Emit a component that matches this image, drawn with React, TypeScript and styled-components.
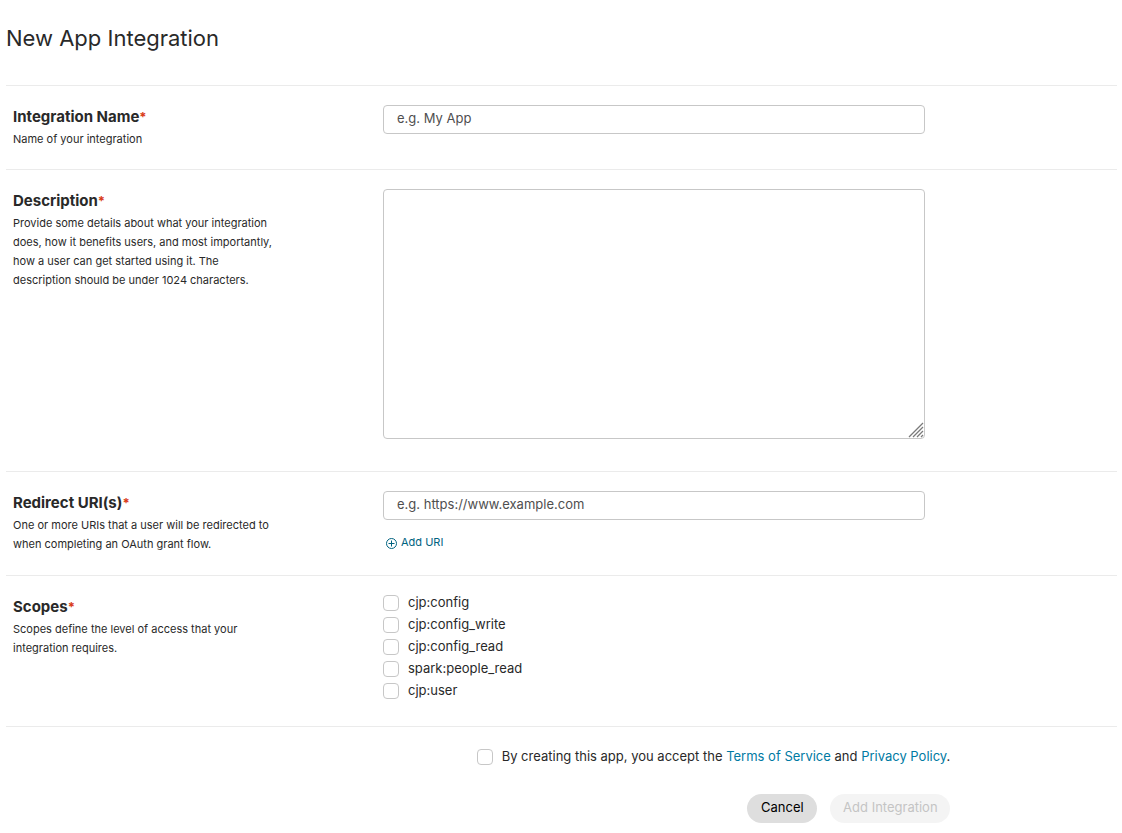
import React, { useState } from 'react';
import styled, { createGlobalStyle } from 'styled-components';

const GlobalStyle = createGlobalStyle`
  *, *::before, *::after { box-sizing: border-box; }
  body {
    margin: 0;
    background: #fff;
    color: #292929;
    font-family: Inter, "Liberation Sans", sans-serif;
    font-size: 13px;
    line-height: 20px;
  }
`;

const Page = styled.main`
  padding: 23px 5px 10px 6px;
`;

const Title = styled.h1`
  margin: 0 0 32px;
  font-size: 22px;
  line-height: 30px;
  font-weight: 400;
`;

const Section = styled.section`
  display: grid;
  grid-template-columns: minmax(0, 1fr) minmax(0, 2fr);
  column-gap: 6px;
  padding: 19px 6px 20px 7px;
  border-top: 1px solid #ebebeb;
`;

const Heading = styled.h2`
  margin: 0 0 1px;
  font-size: 15px;
  line-height: 24px;
  font-weight: 700;
`;

const Required = styled.span`
  color: #d93a16;
  font-size: 13px;
  line-height: 1;
`;

const Help = styled.p`
  max-width: 264px;
  margin: 0;
  font-size: 11px;
  line-height: 19px;
`;

const Field = styled.div`
  display: flex;
  flex-direction: column;
  align-items: flex-start;
`;

const TextInput = styled.input`
  width: 100%;
  max-width: 542px;
  height: 29px;
  padding: 0 13px 3px;
  border: 1px solid #c7c7c7;
  border-radius: 4px;
  background: #fff;
  color: #292929;
  font: inherit;
  &::placeholder { color: #4f4f4f; opacity: 1; }
`;

const AreaWrap = styled.div`
  position: relative;
  width: 100%;
  max-width: 542px;
  margin-bottom: 12px;
`;

const TextArea = styled.textarea`
  display: block;
  width: 100%;
  height: 250px;
  padding: 8px 13px;
  border: 1px solid #c7c7c7;
  border-radius: 4px;
  background: #fff;
  color: #292929;
  font: inherit;
  resize: vertical;
  &::-webkit-resizer { background: transparent; }
`;

const Grip = styled.svg`
  position: absolute;
  right: 1px;
  bottom: 1px;
  pointer-events: none;
`;

const AddButton = styled.button`
  display: flex;
  align-items: center;
  gap: 3px;
  margin: 12px 0 3px;
  padding: 0 3px;
  border: 0;
  background: none;
  color: #00627f;
  font: inherit;
  font-size: 11px;
  line-height: 20px;
  cursor: pointer;
`;

const List = styled.ul`
  margin: 0;
  padding: 0 0 1px;
  list-style: none;
`;

const ScopeRow = styled.li`
  display: flex;
  align-items: flex-start;
  gap: 9px;
  height: 22px;
  line-height: 14px;
`;

const Agreement = styled.div`
  display: flex;
  align-items: flex-start;
  gap: 9px;
  line-height: 14px;
`;

const Checkbox = styled.input`
  appearance: none;
  flex: none;
  width: 16px;
  height: 16px;
  margin: 0;
  border: 1px solid #c7c7c7;
  border-radius: 4px;
  background: #fff;
  &:checked { background: #007aa3; border-color: #007aa3; }
`;

const Link = styled.a`
  color: #007aa3;
  text-decoration: none;
`;

const FooterRule = styled.footer`
  padding-top: 22px;
  border-top: 1px solid #ebebeb;
`;

const FooterContent = styled.div`
  display: flex;
  flex-direction: column;
  align-items: flex-end;
  gap: 29px;
  width: 85%;
`;

const Actions = styled.div`
  display: flex;
  gap: 13px;
`;

const PillButton = styled.button<{ $width: number }>`
  min-width: ${(p) => p.$width}px;
  height: 29px;
  padding: 0 0 4px;
  border: 0;
  border-radius: 15px;
  background: #dedede;
  color: #000;
  font: inherit;
  &:disabled { background: #f4f4f4; color: #c4c4c4; }
`;

const scopes = ['cjp:config', 'cjp:config_write', 'cjp:config_read', 'spark:people_read', 'cjp:user'];

type SectionHeadProps = { title: string; help: string; htmlFor?: string };

function SectionHead({ title, help, htmlFor }: SectionHeadProps) {
  return (
    <div>
      <Heading>
        {htmlFor ? <label htmlFor={htmlFor}>{title}</label> : title}
        <Required>*</Required>
      </Heading>
      <Help>{help}</Help>
    </div>
  );
}

export default function App() {
  const [accepted, setAccepted] = useState(false);
  return (
    <>
      <GlobalStyle />
      <Page>
        <Title>New App Integration</Title>
        <Section>
          <SectionHead title="Integration Name" help="Name of your integration" htmlFor="name" />
          <Field>
            <TextInput id="name" type="text" placeholder="e.g. My App" />
          </Field>
        </Section>
        <Section>
          <SectionHead
            title="Description"
            help="Provide some details about what your integration does, how it benefits users, and most importantly, how a user can get started using it. The description should be under 1024 characters."
            htmlFor="description"
          />
          <Field>
            <AreaWrap>
              <TextArea id="description" />
              <Grip width="16" height="16" viewBox="0 0 16 16" fill="none" stroke="#7a7a7a" strokeWidth="1.3" aria-hidden="true">
                <path d="M1 15 15 1M5 15 15 5M9 15 15 9M13 15 15 13" />
              </Grip>
            </AreaWrap>
          </Field>
        </Section>
        <Section>
          <SectionHead
            title="Redirect URI(s)"
            help="One or more URIs that a user will be redirected to when completing an OAuth grant flow."
            htmlFor="redirect"
          />
          <Field>
            <TextInput id="redirect" type="text" placeholder="e.g. https://www.example.com" />
            <AddButton type="button">
              <svg width="12" height="14" viewBox="0 0 12 14" fill="none" stroke="currentColor" aria-hidden="true">
                <circle cx="5.5" cy="8.5" r="5" />
                <path d="M5.5 5.5v6M2.5 8.5h6" />
              </svg>
              Add URI
            </AddButton>
          </Field>
        </Section>
        <Section>
          <SectionHead title="Scopes" help="Scopes define the level of access that your integration requires." />
          <List>
            {scopes.map((s) => (
              <ScopeRow key={s}>
                <Checkbox type="checkbox" id={s} />
                <label htmlFor={s}>{s}</label>
              </ScopeRow>
            ))}
          </List>
        </Section>
        <FooterRule>
          <FooterContent>
            <Agreement>
              <Checkbox
                type="checkbox"
                id="accept"
                checked={accepted}
                onChange={(e) => setAccepted(e.target.checked)}
              />
              <label htmlFor="accept">
                By creating this app, you accept the <Link href="#terms">Terms of Service</Link> and{' '}
                <Link href="#privacy">Privacy Policy</Link>.
              </label>
            </Agreement>
            <Actions>
              <PillButton type="button" $width={70}>Cancel</PillButton>
              <PillButton type="submit" $width={120} disabled={!accepted}>Add Integration</PillButton>
            </Actions>
          </FooterContent>
        </FooterRule>
      </Page>
    </>
  );
}
